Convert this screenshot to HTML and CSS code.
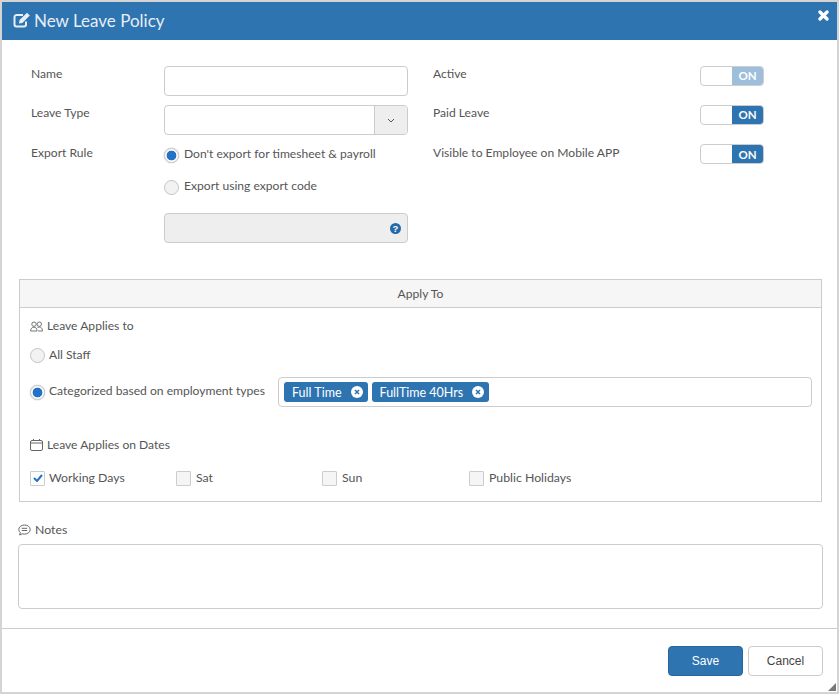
FILE: index.html
```html
<!DOCTYPE html>
<html lang="en">
<head>
<meta charset="utf-8">
<title>New Leave Policy</title>
<link rel="stylesheet" href="styles.css">
</head>
<body>
<div class="dialog">
  <header class="head">
    <h1 class="title">
      <svg class="edit-ico" viewBox="0 0 18 16" width="18" height="16"><path d="M13 9.500v3a2 2 0 0 1-2 2H3.500a2 2 0 0 1-2-2V5a2 2 0 0 1 2-2h6.500" fill="none" stroke="#e6eef6" stroke-width="2"/><path d="M6.500 8 14 .8l2.800 2.800L9.400 11 6 11.500z" fill="#e6eef6"/></svg>
      New Leave Policy
    </h1>
    <svg class="close-ico" viewBox="0 0 10 10" width="11" height="11"><path d="M1.800 1.800l6.400 6.400M8.200 1.800L1.800 8.200" stroke="#fff" stroke-width="3" stroke-linecap="round"/></svg>
  </header>
  <main class="content">
    <section class="top">
      <div class="col-left">
        <div class="row row-name"><label class="lbl">Name</label><div class="input"></div></div>
        <div class="row row-type"><label class="lbl">Leave Type</label>
          <div class="input select"><span class="addon"><svg viewBox="0 0 8 5" width="8" height="5"><path d="M1 1l3 3 3-3" fill="none" stroke="#555" stroke-width="1"/></svg></span></div>
        </div>
        <div class="row row-export"><label class="lbl">Export Rule</label>
          <div class="options">
            <div class="opt opt-first"><span class="radio on"></span><span class="t">Don't export for timesheet &amp; payroll</span></div>
            <div class="opt opt-second"><span class="radio"></span><span class="t">Export using export code</span></div>
            <div class="input disabled"><span class="help">?</span></div>
          </div>
        </div>
      </div>
      <div class="col-right">
        <div class="trow"><span class="lbl">Active</span><span class="toggle faded"><span class="knob"></span><span class="on-part">ON</span></span></div>
        <div class="trow"><span class="lbl">Paid Leave</span><span class="toggle"><span class="knob"></span><span class="on-part">ON</span></span></div>
        <div class="trow trow-last"><span class="lbl">Visible to Employee on Mobile APP</span><span class="toggle"><span class="knob"></span><span class="on-part">ON</span></span></div>
      </div>
    </section>
    <section class="panel">
      <div class="panel-head">Apply To</div>
      <div class="panel-body">
        <div class="sub sub-first">
          <svg class="sub-ico" viewBox="0 0 13 11" width="13" height="11"><g fill="none" stroke="#666" stroke-width=".9"><circle cx="4" cy="3.200" r="2.200"/><circle cx="9.300" cy="3.200" r="2.200"/><path d="M.6 10c0-2.500 1.500-3.800 3.400-3.800S7 7.500 7 10zM7.500 6.400c.5-.2 1.100-.3 1.800-.3 1.900 0 3.200 1.400 3.200 3.900H8"/></g></svg>
          <span class="t">Leave Applies to</span>
        </div>
        <div class="opt opt-all"><span class="radio"></span>All Staff</div>
        <div class="opt-cat">
          <div class="opt"><span class="radio on"></span><span class="t">Categorized based on employment types</span></div>
          <div class="tags">
            <span class="tag">Full Time<span class="tag-x"><svg viewBox="0 0 6 6" width="6" height="6"><path d="M1 1l4 4M5 1L1 5" stroke="#2e74b0" stroke-width="1.500"/></svg></span></span>
            <span class="tag">FullTime 40Hrs<span class="tag-x"><svg viewBox="0 0 6 6" width="6" height="6"><path d="M1 1l4 4M5 1L1 5" stroke="#2e74b0" stroke-width="1.500"/></svg></span></span>
          </div>
        </div>
        <div class="sub sub-dates">
          <svg class="sub-ico" viewBox="0 0 13 12" width="13" height="12"><rect x=".5" y="1.500" width="12" height="10" rx="1.500" fill="none" stroke="#666"/><path d="M.5 4h12" stroke="#666"/><path d="M3.500 0v2M9.500 0v2" stroke="#666"/></svg>
          <span class="t">Leave Applies on Dates</span>
        </div>
        <div class="days">
          <div class="day day-w"><span class="check on"><svg viewBox="0 0 10 8" width="10" height="8"><path d="M1 4l3 3 5-6" fill="none" stroke="#2472c8" stroke-width="2"/></svg></span><span class="t">Working Days</span></div>
          <div class="day day-s"><span class="check"></span><span class="t">Sat</span></div>
          <div class="day day-u"><span class="check"></span><span class="t">Sun</span></div>
          <div class="day day-p"><span class="check"></span><span class="t">Public Holidays</span></div>
        </div>
      </div>
    </section>
    <section class="notes">
      <div class="notes-label">
        <svg viewBox="0 0 13 12" width="13" height="12"><path d="M6.500 1C3.300 1 .8 3 .8 5.500c0 1.200.6 2.300 1.500 3.100L1.600 11l2.700-1.200c.7.200 1.400.3 2.200.3 3.200 0 5.700-2 5.700-4.600S9.700 1 6.500 1z" fill="none" stroke="#666"/><path d="M3.800 4.300h5.400M3.800 6.500h5.400" stroke="#666"/></svg>
        <span class="t">Notes</span>
      </div>
      <div class="textarea"></div>
    </section>
  </main>
  <footer class="foot">
    <button class="btn primary" type="button">Save</button>
    <button class="btn" type="button">Cancel</button>
    <svg class="grip" viewBox="0 0 8 8" width="8" height="8"><path d="M8 0v8H0z" fill="#777"/></svg>
  </footer>
</div>
</body>
</html>
```
FILE: styles.css
```css
* { box-sizing: border-box; }
html, body { margin: 0; padding: 0; }
body { width: 839px; height: 694px; background: #fff; font-family: Lato, "Open Sans", sans-serif; font-size: 12.1px; color: #555; overflow: hidden; }
.dialog { position: relative; width: 839px; height: 694px; border: 2px solid #d4d4d4; background: #fff; display: flex; flex-direction: column; }
.head { height: 38px; flex: none; background: #2e74b0; display: flex; justify-content: space-between; color: #e6eef6; }
.title { margin: 0 0 2px; font-size: 17px; font-weight: 400; display: flex; align-items: center; gap: 3px; padding-left: 11px; height: 36px; }
.edit-ico { display: block; }
.close-ico { margin: 8px 8px 0 0; }
.content { flex: 1; padding: 0 14px 0 16px; }
.top { display: flex; height: 237px; padding: 26px 0 0 13px; }
.col-left { width: 390px; }
.row { display: flex; }
.lbl { display: block; color: #555; line-height: 16px; }
.row .lbl { width: 133px; flex: none; }
.row-name { height: 39px; }
.row-type { height: 40px; }
.input { width: 244px; height: 30px; border: 1px solid #ccc; border-radius: 4px; background: #fff; }
.select { display: flex; justify-content: flex-end; }
.addon { width: 33px; background: #eee; border-left: 1px solid #ccc; border-radius: 0 3px 3px 0; display: flex; align-items: center; justify-content: center; }
.options { display: flex; flex-direction: column; }
.opt { display: flex; align-items: center; gap: 5px; line-height: 16px; white-space: nowrap; }
.t { margin-bottom: 2px; }
.opt-first { height: 20px; margin-bottom: 12px; }
.opt-second { height: 20px; margin-bottom: 16px; }
.radio { width: 15px; height: 15px; border-radius: 50%; border: 1px solid #c4c4c4; background: #f2f2f2; flex: none; }
.radio.on { background: radial-gradient(circle, #2472c8 0 4.600px, #fff 5.200px); box-shadow: 0 0 1px #888; }
.disabled { background: #eee; display: flex; align-items: center; justify-content: flex-end; padding-right: 6px; }
.help { width: 11px; height: 11px; border-radius: 50%; background: #2469a8; color: #fff; font-size: 9.500px; font-weight: 700; line-height: 11px; text-align: center; font-family: "Liberation Sans", sans-serif; }
.col-right { width: 331px; margin-left: 12px; }
.trow { display: flex; justify-content: space-between; height: 39px; }
.trow-last .lbl { padding-top: 1px; }
.trow-last .on-part { line-height: 20px; }
.toggle { width: 64px; height: 20px; border: 1px solid #ccc; border-radius: 4px; display: flex; background: #fff; overflow: hidden; }
.knob { width: 31px; }
.on-part { flex: 1; background: #2e74b0; color: #fff; font-size: 11.500px; font-weight: 700; line-height: 18px; text-align: center; }
.faded .on-part { background: #9dbfdc; }
.panel { width: 803px; height: 223px; margin-top: 2px; margin-left: 1px; border: 1px solid #ccc; }
.panel-head { height: 28px; background: #f6f6f6; border-bottom: 1px solid #ccc; text-align: center; line-height: 27px; }
.panel-body { padding: 0 9px 0 10px; }
.sub { display: flex; align-items: center; gap: 4px; height: 16px; }
.sub-first { margin-top: 10px; }
.opt-all { margin-top: 13px; height: 16px; gap: 4px; }
.opt-cat { display: flex; align-items: center; justify-content: space-between; margin-top: 14px; height: 30px; }
.opt-cat .opt { gap: 4px; }
.tags { width: 534px; height: 30px; border: 1px solid #ccc; border-radius: 4px; display: flex; align-items: center; gap: 4px; padding-left: 5px; }
.tag { height: 20px; padding: 0 5px 0 8px; background: #2e74b0; color: #fff; border-radius: 3px; display: flex; align-items: center; justify-content: space-between; gap: 9px; font-size: 12.500px; }
.tag-x { width: 12px; height: 12px; border-radius: 50%; background: #fff; display: flex; align-items: center; justify-content: center; }
.sub-dates { margin-top: 30px; }
.days { display: flex; margin-top: 17px; font-size: 12.300px; }
.day { display: flex; align-items: center; gap: 5px; height: 16px; }
.day-w { width: 146px; gap: 4px; }
.day-s { width: 146px; }
.day-u { width: 147px; }
.check { width: 15px; height: 15px; border: 1px solid #ccc; border-radius: 1px; background: #f5f5f5; display: flex; align-items: center; justify-content: center; }
.check.on { background: #fff; }
.notes-label { display: flex; align-items: center; gap: 4px; margin-top: 20px; height: 16px; font-size: 12.300px; }
.textarea { width: 805px; height: 65px; margin-top: 6px; border: 1px solid #ccc; border-radius: 4px; }
.foot { flex: none; position: relative; height: 64px; border-top: 1px solid #ccc; display: flex; justify-content: flex-end; gap: 5px; padding: 17px 14px 0 0; }
.btn { width: 75px; height: 30px; border: 1px solid #ccc; border-radius: 4px; background: #fff; color: #444; font-family: "Liberation Sans", sans-serif; font-size: 12px; padding: 0; }
.primary { background: #2e74b0; border-color: #27659b; color: #fff; }
.grip { position: absolute; right: 1px; bottom: 1px; }
```
